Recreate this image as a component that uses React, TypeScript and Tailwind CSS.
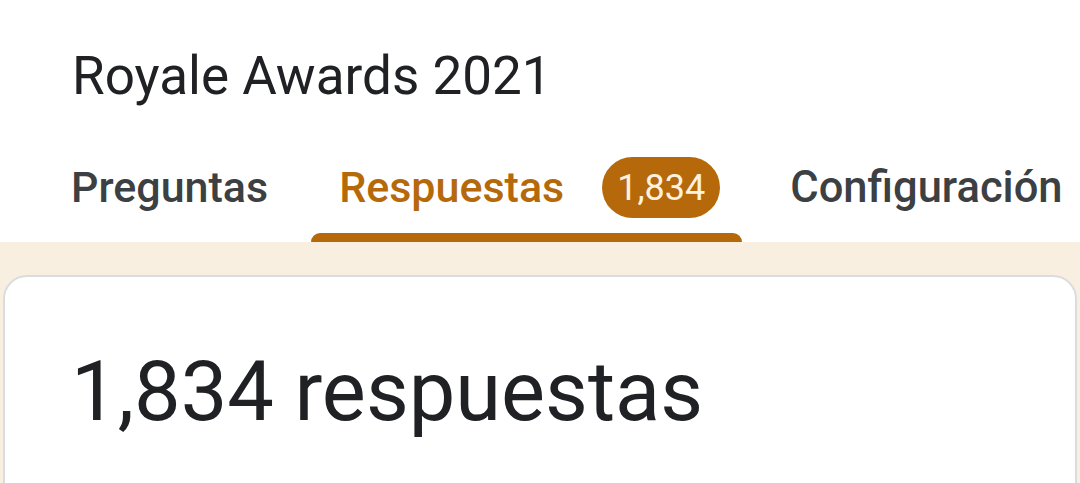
import React from "react";

export default function App() {
  const font = { fontFamily: "Roboto, 'Noto Sans', sans-serif" };
  return (
    <div className="w-[1080px] h-[483px] overflow-hidden bg-white flex flex-col" style={font}>
      <div className="pt-[50px] pl-[72px]">
        <div className="h-[53px] leading-none text-[53px] text-[#202124] whitespace-nowrap">Royale Awards 2021</div>
      </div>
      <div className="mt-[63px] flex items-stretch">
        <div className="ml-[71px] flex flex-col">
          <div className="h-[43px] flex items-center text-[43px] leading-none font-medium text-[#3c4043]">Preguntas</div>
          <div className="mt-[24px] h-[9px]" />
        </div>
        <div className="ml-[43px] flex flex-col">
          <div className="h-[43px] flex items-center pl-[28px] pr-[22px]">
            <span className="text-[43px] leading-none font-medium text-[#b5690a]">Respuestas</span>
            <span className="ml-[38px] h-[61px] px-[15px] rounded-full bg-[#b5690a] text-[#fdf1df] text-[36px] leading-none flex items-center">1,834</span>
          </div>
          <div className="mt-[24px] h-[9px] rounded-t-[9px] bg-[#b5690a]" />
        </div>
        <div className="ml-[48px] flex flex-col">
          <div className="h-[43px] flex items-center text-[43.5px] leading-none font-medium text-[#3c4043] whitespace-nowrap">Configuración</div>
          <div className="mt-[24px] h-[9px]" />
        </div>
      </div>
      <div className="h-[3px] bg-[#dadce0]" />
      <div className="flex-1 bg-[#f9efe0] pt-[33px] px-[3px]">
        <div className="h-[300px] bg-white border-2 border-[#dadce0] rounded-t-[24px] pt-[73px] pl-[66px]">
          <div className="text-[83px] leading-none text-[#202124] whitespace-nowrap">1,834 respuestas</div>
        </div>
      </div>
    </div>
  );
}
